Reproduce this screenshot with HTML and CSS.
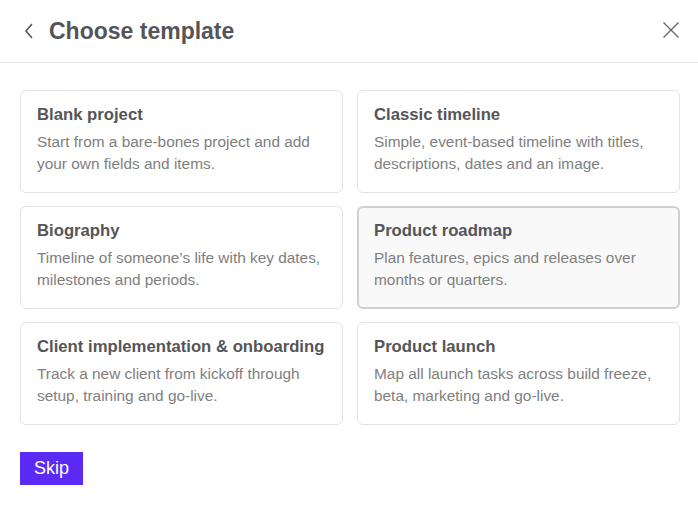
FILE: index.html
```html
<!DOCTYPE html>
<html>
<head>
<meta charset="utf-8">
<link rel="stylesheet" href="styles.css">
</head>
<body>
<div class="dialog">
  <header class="header">
    <button class="icon-btn back" aria-label="Back">
      <svg width="14" height="20" viewBox="0 0 14 20"><path d="M10 3 L4 10 L10 17" fill="none" stroke="#555" stroke-width="1.6"/></svg>
    </button>
    <h1 class="title">Choose template</h1>
    <button class="icon-btn close" aria-label="Close">
      <svg width="18" height="18" viewBox="0 0 18 18"><path d="M1.5 1.5 L16.5 16.5 M16.5 1.5 L1.5 16.5" fill="none" stroke="#666" stroke-width="1.3"/></svg>
    </button>
  </header>
  <main class="content">
    <div class="grid">
      <div class="card">
        <div class="card-title">Blank project</div>
        <div class="card-desc">Start from a bare-bones project and add your own fields and items.</div>
      </div>
      <div class="card">
        <div class="card-title">Classic timeline</div>
        <div class="card-desc">Simple, event-based timeline with titles, descriptions, dates and an image.</div>
      </div>
      <div class="card">
        <div class="card-title">Biography</div>
        <div class="card-desc">Timeline of someone’s life with key dates, milestones and periods.</div>
      </div>
      <div class="card card-hover">
        <div class="card-title">Product roadmap</div>
        <div class="card-desc">Plan features, epics and releases over months or quarters.</div>
      </div>
      <div class="card">
        <div class="card-title">Client implementation &amp; onboarding</div>
        <div class="card-desc">Track a new client from kickoff through setup, training and go-live.</div>
      </div>
      <div class="card">
        <div class="card-title">Product launch</div>
        <div class="card-desc">Map all launch tasks across build freeze, beta, marketing and go-live.</div>
      </div>
    </div>
    <button class="skip">Skip</button>
  </main>
</div>
</body>
</html>
```
FILE: styles.css
```css
* { box-sizing: border-box; }
html, body { margin: 0; padding: 0; background: #fff; }
body { font-family: "Liberation Sans", Arial, sans-serif; color: #555; }
.header {
  height: 63px;
  border-bottom: 1px solid #e6e6e6;
  display: flex;
  align-items: center;
  padding: 0 18px 0 20px;
}
.icon-btn {
  background: none; border: 0; padding: 0; cursor: pointer;
  display: flex; align-items: center; justify-content: center;
}
.back { width: 18px; margin-right: 11px; margin-top: -1px; }
.title {
  margin: 0;
  font-size: 23px;
  font-weight: bold;
  color: #555558;
  flex: 1;
  letter-spacing: 0;
}
.close { width: 18px; height: 18px; margin-top: -2px; }
.content { padding: 27px 18px 0 20px; }
.grid {
  display: grid;
  grid-template-columns: 323px 323px;
  column-gap: 14px;
  row-gap: 13px;
}
.card {
  height: 103px;
  border: 1px solid #e3e3e3;
  border-radius: 6px;
  padding: 12px 16px;
  background: #fff;
}
.card-hover {
  border: 2px solid #cfcfcf;
  background: #f9f9f9;
  padding: 11px 15px;
}
.card-title {
  font-size: 16.7px;
  font-weight: bold;
  color: #555558;
  line-height: 24px;
  margin-bottom: 4px;
  white-space: nowrap;
}
.card-desc {
  font-size: 15.4px;
  line-height: 22px;
  color: #808080;
}
.skip {
  margin-top: 27px;
  background: #5b2af5;
  color: #fff;
  border: 0;
  font-family: "Liberation Sans", Arial, sans-serif;
  font-size: 18px;
  height: 33px;
  padding: 0 14px;
  cursor: pointer;
}
```
